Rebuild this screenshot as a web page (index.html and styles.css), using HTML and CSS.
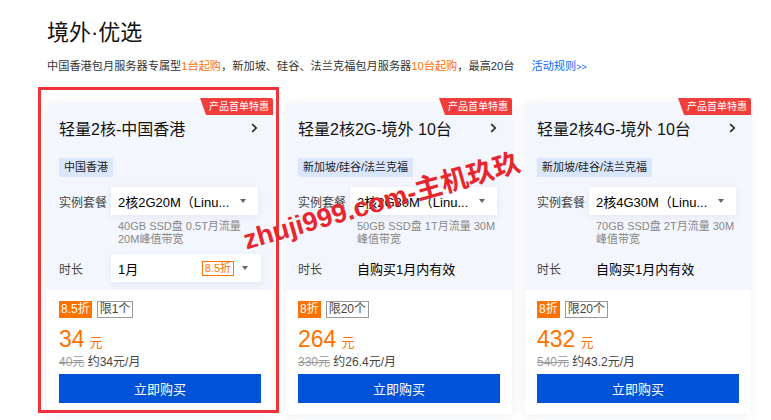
FILE: index.html
```html
<!DOCTYPE html>
<html lang="zh-CN">
<head>
<meta charset="utf-8">
<title>境外·优选</title>
<link rel="stylesheet" href="styles.css">
</head>
<body>
<div class="page">
  <h1 class="title">境外·优选</h1>
  <p class="sub">中国香港包月服务器专属型<em>1台起购</em>，新加坡、硅谷、法兰克福包月服务器<em>10台起购</em>，最高20台<a class="rule" href="#">活动规则<span>&gt;&gt;</span></a></p>

  <div class="cards">
    <div class="card">
      <div class="ribbon">产品首单特惠</div>
      <div class="card-top">
        <div class="head">
          <span class="name">轻量2核-中国香港</span>
          <svg class="chev" viewBox="0 0 7 10" width="7" height="10"><path d="M1.2 1.2 L5.2 5 L1.2 8.8" fill="none" stroke="#222" stroke-width="1.6"/></svg>
        </div>
        <div class="region">中国香港</div>
        <div class="row">
          <span class="label">实例套餐</span>
          <div class="select"><span class="sel-text">2核2G20M（Linu...</span><i class="caret"></i></div>
        </div>
        <div class="desc">40GB SSD盘 0.5T月流量 20M峰值带宽</div>
        <div class="row row2">
          <span class="label">时长</span>
          <div class="select select2"><span class="sel-text">1月</span><span class="disc-tag">8.5折</span><i class="caret"></i></div>
        </div>
      </div>
      <div class="card-bot">
        <div class="badges"><span class="b-off">8.5折</span><span class="b-lim">限1个</span></div>
        <div class="price">34<small>元</small></div>
        <div class="orig"><s>40元</s> 约34元/月</div>
        <a class="buy" href="#">立即购买</a>
      </div>
      <div class="highlight"></div>
    </div>

    <div class="card">
      <div class="ribbon">产品首单特惠</div>
      <div class="card-top">
        <div class="head">
          <span class="name">轻量2核2G-境外 10台</span>
          <svg class="chev" viewBox="0 0 7 10" width="7" height="10"><path d="M1.2 1.2 L5.2 5 L1.2 8.8" fill="none" stroke="#222" stroke-width="1.6"/></svg>
        </div>
        <div class="region">新加坡/硅谷/法兰克福</div>
        <div class="row">
          <span class="label">实例套餐</span>
          <div class="select"><span class="sel-text">2核2G30M（Linu...</span><i class="caret"></i></div>
        </div>
        <div class="desc">50GB SSD盘 1T月流量 30M峰值带宽</div>
        <div class="row row2">
          <span class="label">时长</span>
          <span class="value">自购买1月内有效</span>
        </div>
      </div>
      <div class="card-bot">
        <div class="badges"><span class="b-off">8折</span><span class="b-lim">限20个</span></div>
        <div class="price">264<small>元</small></div>
        <div class="orig"><s>330元</s> 约26.4元/月</div>
        <a class="buy" href="#">立即购买</a>
      </div>
    </div>

    <div class="card">
      <div class="ribbon">产品首单特惠</div>
      <div class="card-top">
        <div class="head">
          <span class="name">轻量2核4G-境外 10台</span>
          <svg class="chev" viewBox="0 0 7 10" width="7" height="10"><path d="M1.2 1.2 L5.2 5 L1.2 8.8" fill="none" stroke="#222" stroke-width="1.6"/></svg>
        </div>
        <div class="region">新加坡/硅谷/法兰克福</div>
        <div class="row">
          <span class="label">实例套餐</span>
          <div class="select"><span class="sel-text">2核4G30M（Linu...</span><i class="caret"></i></div>
        </div>
        <div class="desc">70GB SSD盘 2T月流量 30M峰值带宽</div>
        <div class="row row2">
          <span class="label">时长</span>
          <span class="value">自购买1月内有效</span>
        </div>
      </div>
      <div class="card-bot">
        <div class="badges"><span class="b-off">8折</span><span class="b-lim">限20个</span></div>
        <div class="price">432<small>元</small></div>
        <div class="orig"><s>540元</s> 约43.2元/月</div>
        <a class="buy" href="#">立即购买</a>
      </div>
    </div>
  </div>

  <div class="watermark">zhuji999.com-主机玖玖</div>
</div>
</body>
</html>
```

FILE: styles.css
```css
html, body {
  margin: 0;
  padding: 0;
  background: #fff;
}

body {
  font-family: "Liberation Sans", "Noto Sans CJK SC", sans-serif;
  color: #222;
}

.page {
  position: relative;
  padding: 17px 0 0 47px;
  height: 403px;
  overflow: hidden;
}

.title {
  margin: 0;
  font-size: 22px;
  line-height: 32px;
  font-weight: 400;
  color: #111;
}

.sub {
  margin: 9px 0 0;
  font-size: 11.2px;
  line-height: 16px;
  color: #333;
}

.sub em {
  font-style: normal;
  color: #ff7200;
}

.rule {
  margin-left: 17px;
  color: #006eff;
  text-decoration: none;
}

.rule span {
  font-size: 9px;
}

.cards {
  display: grid;
  grid-template-columns: repeat(3, 226px);
  column-gap: 13px;
  margin-top: 28px;
}

.card {
  position: relative;
  background: #fff;
  box-shadow: 0 2px 12px rgba(30, 50, 90, 0.08);
}

.ribbon {
  position: absolute;
  top: -5px;
  right: 0;
  height: 17px;
  line-height: 17px;
  padding: 0 4px 0 9px;
  font-size: 10px;
  color: #fff;
  background: #f23d3d;
  border-top-right-radius: 2px;
  clip-path: polygon(0 0, 100% 0, 100% 100%, 6px 100%);
  z-index: 2;
}

.card-top {
  background: #f3f6fd;
  padding: 13px 12px 8px;
}

.head {
  display: flex;
  justify-content: space-between;
  align-items: center;
  height: 24px;
}

.name {
  font-size: 16px;
  color: #111;
}

.chev {
  margin-right: 3px;
}

.region {
  width: fit-content;
  margin-top: 18px;
  height: 19px;
  line-height: 19px;
  padding: 0 5px;
  background: #dae6fc;
  font-size: 11px;
  color: #222;
}

.row {
  display: flex;
  align-items: center;
  height: 28px;
  margin-top: 10px;
}

.row2 {
  margin-top: 8px;
}

.label {
  flex: none;
  width: 52px;
  font-size: 12px;
  color: #444;
}

.select {
  box-sizing: border-box;
  display: flex;
  align-items: center;
  width: 147px;
  height: 28px;
  padding: 0 12px 0 7px;
  background: #fff;
  box-shadow: 0 2px 8px rgba(0, 40, 120, 0.07);
}

.select2 {
  width: 150px;
  padding-right: 13px;
}

.sel-text {
  flex: 1;
  font-size: 13px;
  color: #000;
  white-space: nowrap;
}

.caret {
  flex: none;
  width: 0;
  height: 0;
  margin-left: 6px;
  border-left: 3.5px solid transparent;
  border-right: 3.5px solid transparent;
  border-top: 4px solid #666;
}

.disc-tag {
  flex: none;
  font-size: 11px;
  line-height: 13px;
  padding: 0 2px;
  border: 1px solid #ff7200;
  color: #ff7200;
}

.select2 .caret {
  margin-left: 8px;
}

.value {
  padding-left: 7px;
  font-size: 13px;
  color: #000;
}

.desc {
  width: 142px;
  margin: 5px 0 0 59px;
  font-size: 11px;
  line-height: 13px;
  color: #888;
}

.card-bot {
  padding: 11px 12px 11px;
}

.badges {
  display: flex;
  gap: 5px;
  height: 17px;
}

.b-off {
  padding: 0 2px;
  background: #ff7200;
  color: #fff;
  font-size: 12px;
  line-height: 17px;
}

.b-lim {
  padding: 0 2px;
  border: 1px solid #999;
  color: #444;
  font-size: 12px;
  line-height: 15px;
}

.price {
  margin-top: 7px;
  font-size: 23px;
  line-height: 28px;
  color: #ff7200;
}

.price small {
  margin-left: 5px;
  font-size: 13px;
  line-height: 1;
}

.orig {
  margin-top: 1px;
  font-size: 12px;
  line-height: 16px;
  color: #444;
}

.orig s {
  color: #999;
}

.buy {
  display: flex;
  align-items: center;
  justify-content: center;
  height: 29px;
  margin-top: 4px;
  background: #0052d9;
  color: #fff;
  font-size: 13px;
  text-decoration: none;
}

.highlight {
  position: absolute;
  top: -16px;
  right: -6px;
  bottom: 1px;
  left: -9px;
  border: 3px solid #f0333a;
  pointer-events: none;
  z-index: 3;
}

.watermark {
  position: absolute;
  left: 381px;
  top: 199px;
  transform: translate(-50%, -50%) rotate(-16deg);
  white-space: nowrap;
  font-size: 27px;
  font-weight: 700;
  color: #e8262d;
  z-index: 4;
}
```
